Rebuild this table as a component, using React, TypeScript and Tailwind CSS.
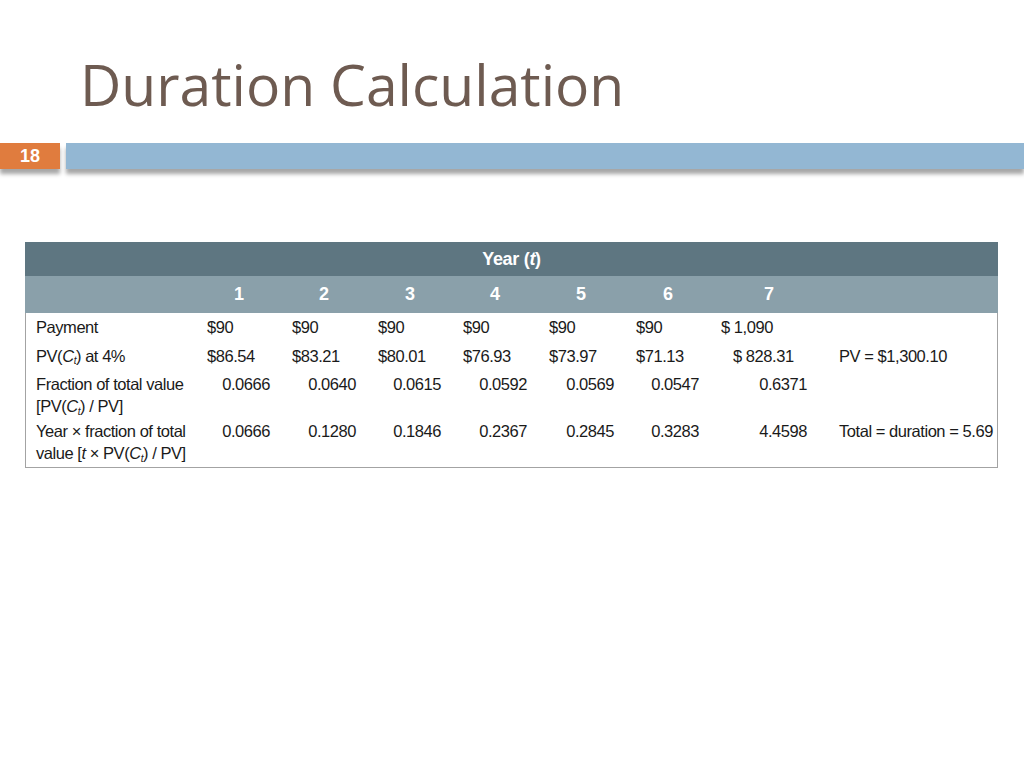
export default function App() {
  const cols = [
    { w: "w-[85px]", head: "pl-[27px]" },
    { w: "w-[86px]", head: "pl-[27px]" },
    { w: "w-[85px]", head: "pl-[27px]" },
    { w: "w-[86px]", head: "pl-[27px]" },
    { w: "w-[87px]", head: "pl-[27px]" },
    { w: "w-[85px]", head: "pl-[27px]" },
  ];
  const payment = ["$90", "$90", "$90", "$90", "$90", "$90"];
  const pv = ["$86.54", "$83.21", "$80.01", "$76.93", "$73.97", "$71.13"];
  const frac = ["0.0666", "0.0640", "0.0615", "0.0592", "0.0569", "0.0547"];
  const yearFrac = ["0.0666", "0.1280", "0.1846", "0.2367", "0.2845", "0.3283"];

  const sans = { fontFamily: '"Liberation Sans", Arial, sans-serif' };

  return (
    <div className="w-[1024px] h-[768px] bg-white overflow-hidden">
      <h1
        className="pl-[80px] pt-[52px] h-[143px] text-[57px] leading-[64px] text-[#6e5b51]"
        style={{ fontFamily: '"Open Sans", sans-serif' }}
      >
        Duration Calculation
      </h1>

      {/* slide number bar */}
      <div className="flex gap-[6px] h-[26px]">
        <div
          className="w-[60px] bg-[#e07c3e] flex items-center justify-center text-white font-bold text-[18px] shadow-[0_5px_4px_rgba(0,0,0,0.35)]"
          style={sans}
        >
          18
        </div>
        <div className="flex-1 bg-[#93b7d3] shadow-[0_5px_4px_rgba(0,0,0,0.35)]" />
      </div>

      {/* table */}
      <div className="ml-[25px] mt-[73px] w-[973px] text-[16.5px] tracking-[-0.45px] text-[#1a1a1a]" style={sans}>
        <div className="h-[34px] bg-[#5e7681] flex items-center justify-center text-white font-bold text-[18px] tracking-[-0.3px]">
          Year (<i>t</i>)
        </div>
        <div className="h-[37px] bg-[#8aa0aa] flex items-center text-white font-bold text-[18px]">
          <div className="w-[182px]" />
          {cols.map((c, i) => (
            <div key={i} className={`${c.w} ${c.head}`}>{i + 1}</div>
          ))}
          <div className="w-[118px] pl-[43px]">7</div>
        </div>
        <div className="border-x border-b border-[#a3a3a3] pb-[4px]">
          <div className="flex items-center h-[29px]">
            <div className="w-[181px] pl-[10px]">Payment</div>
            {payment.map((v, i) => (
              <div key={i} className={cols[i].w}>{v}</div>
            ))}
            <div className="w-[118px]">$ 1,090</div>
          </div>
          <div className="flex items-center h-[28px]">
            <div className="w-[181px] pl-[10px]">
              PV(<i>C</i><sub className="text-[10px] italic">t</sub>) at 4%
            </div>
            {pv.map((v, i) => (
              <div key={i} className={cols[i].w}>{v}</div>
            ))}
            <div className="w-[118px] pl-[12px]">$ 828.31</div>
            <div className="flex-1">PV = $1,300.10</div>
          </div>
          <div className="flex items-start h-[47px] pt-[3px]">
            <div className="w-[181px] pl-[10px] leading-[22px] whitespace-nowrap">
              Fraction of total value
              <br />
              [PV(<i>C</i><sub className="text-[10px] italic">t</sub>) / PV]
            </div>
            {frac.map((v, i) => (
              <div key={i} className={`${cols[i].w} text-right pr-[22px] leading-[22px]`}>{v}</div>
            ))}
            <div className="w-[118px] text-right pr-[32px] leading-[22px]">0.6371</div>
          </div>
          <div className="flex items-start h-[46px] pt-[3px]">
            <div className="w-[181px] pl-[10px] leading-[22px] whitespace-nowrap">
              Year × fraction of total
              <br />
              value [<i>t</i> × PV(<i>C</i><sub className="text-[10px] italic">t</sub>) / PV]
            </div>
            {yearFrac.map((v, i) => (
              <div key={i} className={`${cols[i].w} text-right pr-[22px] leading-[22px]`}>{v}</div>
            ))}
            <div className="w-[118px] text-right pr-[32px] leading-[22px]">4.4598</div>
            <div className="flex-1 leading-[22px] whitespace-nowrap">Total = duration = 5.69</div>
          </div>
        </div>
      </div>
    </div>
  );
}
